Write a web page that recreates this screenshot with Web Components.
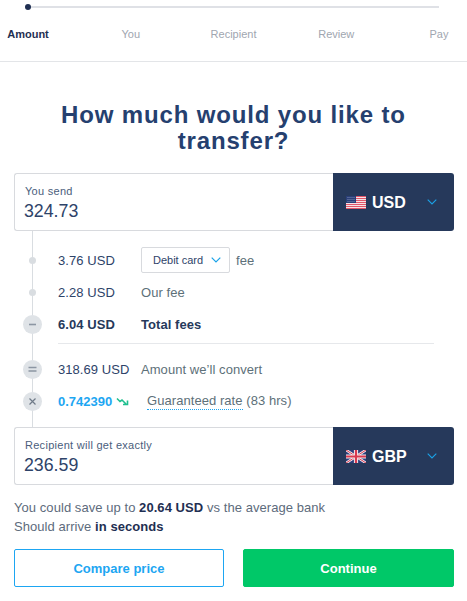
<!DOCTYPE html>
<html>
<head>
<meta charset="utf-8">
<style>
  html, body { margin: 0; background: #fff; }
  body { font-family: "Liberation Sans", Arial, sans-serif; color: #2e4369; width: 467px; }
  svg.flag { display: block; width: 20px; height: 13px; }
  summary-note b { color: #1f2f52; }
</style>
</head>
<body>
<transfer-stepper>
  <step-label active>Amount</step-label>
  <step-label>You</step-label>
  <step-label>Recipient</step-label>
  <step-label>Review</step-label>
  <step-label>Pay</step-label>
</transfer-stepper>

<page-title>How much would you like to transfer?</page-title>

<money-box label="You send" amount="324.73" currency="USD">
  <svg class="flag" slot="flag" viewBox="0 0 20 13">
    <rect width="20" height="13" fill="#f7e3e6"/>
    <path d="M0 .5h20M0 2.5h20M0 4.5h20M0 6.5h20M0 8.5h20M0 10.5h20M0 12.5h20" stroke="#e2566a" stroke-width="1.1"/>
    <rect width="10" height="7" fill="#2a3f78"/>
    <path d="M1.5 1.5h7M1.5 3.5h7M1.5 5.5h7" stroke="#8f9cc0" stroke-width=".8" stroke-dasharray="1 1"/>
  </svg>
</money-box>

<fee-list>
  <fee-row marker="dot" amount="3.76 USD">
    <debit-select>Debit card</debit-select><span style="margin-left:6px">fee</span>
  </fee-row>
  <fee-row marker="dot" amount="2.28 USD">Our fee</fee-row>
  <fee-row marker="minus" amount="6.04 USD" strong>Total fees</fee-row>
  <fee-divider></fee-divider>
  <fee-row marker="equals" amount="318.69 USD">Amount we’ll convert</fee-row>
  <fee-row marker="times" amount="0.742390" rate>
    <span style="margin-left:6px"><dotted-term>Guaranteed rate</dotted-term> (83 hrs)</span>
  </fee-row>
</fee-list>

<money-box label="Recipient will get exactly" amount="236.59" currency="GBP">
  <svg class="flag" slot="flag" viewBox="0 0 20 13">
    <rect width="20" height="13" fill="#2d3f7c"/>
    <path d="M0 0L20 13M20 0L0 13" stroke="#f3eef0" stroke-width="2.6"/>
    <path d="M0 0L20 13M20 0L0 13" stroke="#d8394f" stroke-width="1"/>
    <path d="M10 0V13M0 6.5H20" stroke="#f3eef0" stroke-width="4.2"/>
    <path d="M10 0V13M0 6.5H20" stroke="#d8394f" stroke-width="2.2"/>
  </svg>
</money-box>

<summary-note>
  <div>You could save up to <b>20.64 USD</b> vs the average bank</div>
  <div>Should arrive <b>in seconds</b></div>
</summary-note>

<action-bar>
  <action-button>Compare price</action-button>
  <action-button primary>Continue</action-button>
</action-bar>

<script>
class TransferStepper extends HTMLElement {
  constructor() {
    super();
    this.attachShadow({ mode: "open" });
    this.shadowRoot.innerHTML = `
      <style>
        :host { display: block; border-bottom: 1px solid #e3e5e8; padding: 6px 28px 0; height: 55px; }
        .track { height: 2px; background: #dfe1e6; position: relative; }
        .track::before {
          content: ""; position: absolute; left: -3px; top: -2px;
          width: 6px; height: 6px; border-radius: 50%; background: #1f2f52;
        }
        .labels { display: flex; justify-content: space-between; margin-top: 19px; }
      </style>
      <div class="track"></div>
      <div class="labels"><slot></slot></div>
    `;
  }
}

class StepLabel extends HTMLElement {
  constructor() {
    super();
    this.attachShadow({ mode: "open" });
    this.shadowRoot.innerHTML = `
      <style>
        :host { display: flex; justify-content: center; width: 0; white-space: nowrap; font-size: 11px; line-height: 14px; color: #a0a6b0; }
        :host([active]) { color: #1f2f52; font-weight: bold; }
      </style>
      <slot></slot>
    `;
  }
}

class PageTitle extends HTMLElement {
  constructor() {
    super();
    this.attachShadow({ mode: "open" });
    this.shadowRoot.innerHTML = `
      <style>
        :host { display: block; padding: 40px 40px 19px; text-align: center; font-size: 24px; line-height: 26px; font-weight: bold; letter-spacing: .85px; color: #25406f; }
      </style>
      <slot></slot>
    `;
  }
}

class MoneyBox extends HTMLElement {
  constructor() {
    super();
    this.attachShadow({ mode: "open" });
  }

  connectedCallback() {
    this.shadowRoot.innerHTML = `
      <style>
        :host { display: flex; height: 58px; margin: 0 13px 0 14px; border-radius: 3px; background: #fff; position: relative; }
        .input {
          flex: 1; box-sizing: border-box; padding: 11px 0 0 10px;
          border: 1px solid #d8dade; border-right: 0; border-radius: 3px 0 0 3px;
        }
        .label { font-size: 11px; line-height: 13px; color: #4a5d7c; letter-spacing: .28px; }
        .amount { font-size: 17.75px; line-height: 22px; margin: 2px 0 0 -1px; color: #2e4369; }
        .currency {
          width: 121px; display: flex; align-items: center; box-sizing: border-box; padding-left: 13px;
          background: #26395b; color: #fff; border-radius: 0 3px 3px 0;
          font-size: 16px; font-weight: bold;
        }
        .code { margin-left: 6px; width: 55px; padding-top: 1px; }
        svg.chev { width: 10px; height: 6px; }
      </style>
      <div class="input">
        <div class="label">${this.getAttribute("label")}</div>
        <div class="amount">${this.getAttribute("amount")}</div>
      </div>
      <div class="currency">
        <slot name="flag"></slot>
        <span class="code">${this.getAttribute("currency")}</span>
        <svg class="chev" viewBox="0 0 10 6"><path d="M.7.7L5 5 9.3.7" fill="none" stroke="#1aa3e8" stroke-width="1.1"/></svg>
      </div>
    `;
  }
}

class FeeList extends HTMLElement {
  constructor() {
    super();
    this.attachShadow({ mode: "open" });
    this.shadowRoot.innerHTML = `
      <style>
        :host {
          display: block; padding: 13px 33px 10px 14px;
          background: linear-gradient(#d9dde1, #d9dde1) 32px 0 / 1px 100% no-repeat;
        }
      </style>
      <slot></slot>
    `;
  }
}

const MARKS = {
  dot: "",
  minus: '<path d="M6 9.5h7" stroke="#8c96a3" stroke-width="1.6"/>',
  equals: '<path d="M5.5 7.5h8M5.5 11h8" stroke="#8c96a3" stroke-width="1.4"/>',
  times: '<path d="M6.5 6.5l6 6M12.5 6.5l-6 6" stroke="#6f7a88" stroke-width="1.2"/>',
};

class FeeRow extends HTMLElement {
  constructor() {
    super();
    this.attachShadow({ mode: "open" });
  }

  connectedCallback() {
    const marker = this.getAttribute("marker");
    const trend = this.hasAttribute("rate")
      ? `<svg class="trend" viewBox="0 0 13 9"><path d="M1 1.5l3 3 2-1.5 4 4M7 7.5h4.5V3.5" fill="none" stroke="#1fbf8f" stroke-width="1.6"/></svg>`
      : "";
    const mark = marker === "dot"
      ? `<i class="dot"></i>`
      : `<svg class="big" viewBox="0 0 19 19"><circle cx="9.5" cy="9.5" r="9.5" fill="#dfe3e7"/>${MARKS[marker]}</svg>`;
    this.shadowRoot.innerHTML = `
      <style>
        :host { display: flex; align-items: center; height: 32px; font-size: 13px; letter-spacing: .06px; color: #2e4369; }
        :host([strong]) { font-weight: bold; color: #26395b; }
        .mark { width: 37px; display: flex; justify-content: center; margin-right: 7px; }
        .dot { width: 7px; height: 7px; border-radius: 50%; background: #d9dde1; }
        .big { width: 19px; height: 19px; display: block; }
        .amount { width: 83px; white-space: nowrap; display: flex; align-items: center; }
        :host([rate]) .amount { color: #1da6f2; font-weight: bold; letter-spacing: 0; }
        .trend { width: 13px; height: 9px; margin-left: 4px; flex: none; }
        .text { display: flex; align-items: center; color: #5d7079; white-space: nowrap; }
        :host([strong]) .text { color: #26395b; }
      </style>
      <div class="mark">${mark}</div>
      <div class="amount">${this.getAttribute("amount")}${trend}</div>
      <div class="text"><slot></slot></div>
    `;
  }
}

class FeeDivider extends HTMLElement {
  constructor() {
    super();
    this.attachShadow({ mode: "open" });
    this.shadowRoot.innerHTML = `
      <style>
        :host { display: block; margin: 3px 0 9px 44px; height: 1px; background: #e6e8eb; }
      </style>
    `;
  }
}

class DebitSelect extends HTMLElement {
  constructor() {
    super();
    this.attachShadow({ mode: "open" });
    this.shadowRoot.innerHTML = `
      <style>
        :host {
          display: flex; align-items: center; justify-content: space-between; box-sizing: border-box;
          width: 89px; height: 26px; padding: 0 8px 0 11px;
          border: 1px solid #d8dade; border-radius: 2px;
          font-size: 11px; letter-spacing: 0; color: #2e4369;
        }
        svg { width: 10px; height: 6px; }
      </style>
      <slot></slot>
      <svg viewBox="0 0 10 6"><path d="M.7.7L5 5 9.3.7" fill="none" stroke="#1aa3e8" stroke-width="1.2"/></svg>
    `;
  }
}

class DottedTerm extends HTMLElement {
  constructor() {
    super();
    this.attachShadow({ mode: "open" });
    this.shadowRoot.innerHTML = `
      <style>
        :host { display: inline-block; border-bottom: 1px dotted #1da6f2; line-height: 16px; }
      </style>
      <slot></slot>
    `;
  }
}

class SummaryNote extends HTMLElement {
  constructor() {
    super();
    this.attachShadow({ mode: "open" });
    this.shadowRoot.innerHTML = `
      <style>
        :host { display: block; padding: 13px 14px 0; font-size: 13px; letter-spacing: .06px; line-height: 19px; color: #5d6b7c; }
        ::slotted(div) { white-space: nowrap; }
      </style>
      <slot></slot>
    `;
  }
}

class ActionBar extends HTMLElement {
  constructor() {
    super();
    this.attachShadow({ mode: "open" });
    this.shadowRoot.innerHTML = `
      <style>
        :host { display: grid; grid-template-columns: 210px 211px; column-gap: 19px; padding: 13px 13px 13px 14px; }
      </style>
      <slot></slot>
    `;
  }
}

class ActionButton extends HTMLElement {
  constructor() {
    super();
    this.attachShadow({ mode: "open" });
    this.shadowRoot.innerHTML = `
      <style>
        :host {
          display: flex; align-items: center; justify-content: center; box-sizing: border-box; height: 38px;
          border: 1px solid #1da6f2; border-radius: 2px; color: #1da6f2; font-size: 13px; font-weight: bold;
        }
        :host([primary]) { background: #00c868; border-color: #00c868; color: #fff; }
      </style>
      <slot></slot>
    `;
  }
}

customElements.define("transfer-stepper", TransferStepper);
customElements.define("step-label", StepLabel);
customElements.define("page-title", PageTitle);
customElements.define("money-box", MoneyBox);
customElements.define("fee-list", FeeList);
customElements.define("fee-row", FeeRow);
customElements.define("fee-divider", FeeDivider);
customElements.define("debit-select", DebitSelect);
customElements.define("dotted-term", DottedTerm);
customElements.define("summary-note", SummaryNote);
customElements.define("action-bar", ActionBar);
customElements.define("action-button", ActionButton);
</script>
</body>
</html>
